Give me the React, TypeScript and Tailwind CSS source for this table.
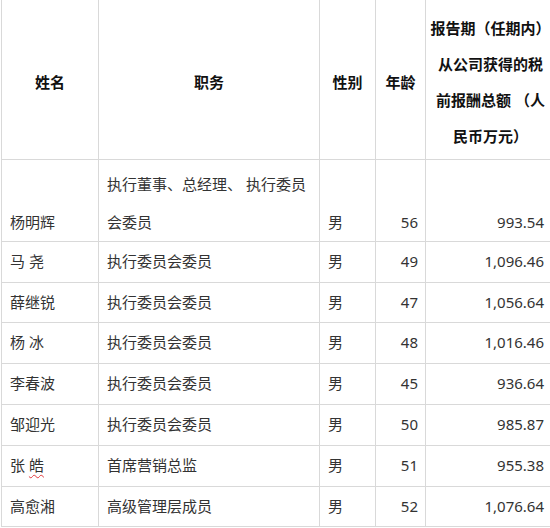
import React from "react";

const rows: { name: React.ReactNode; title: string; sex: string; age: string; pay: string; short?: boolean }[] = [
  { name: "马 尧", title: "执行委员会委员", sex: "男", age: "49", pay: "1,096.46" },
  { name: "薛继锐", title: "执行委员会委员", sex: "男", age: "47", pay: "1,056.64", short: true },
  { name: "杨 冰", title: "执行委员会委员", sex: "男", age: "48", pay: "1,016.46" },
  { name: "李春波", title: "执行委员会委员", sex: "男", age: "45", pay: "936.64" },
  { name: "邹迎光", title: "执行委员会委员", sex: "男", age: "50", pay: "985.87" },
  {
    name: (
      <>
        张 <span className="underline decoration-wavy decoration-[#e0393e] underline-offset-[3px] decoration-1">皓</span>
      </>
    ),
    title: "首席营销总监",
    sex: "男",
    age: "51",
    pay: "955.38",
  },
  { name: "高愈湘", title: "高级管理层成员", sex: "男", age: "52", pay: "1,076.64", short: true },
];

export default function App() {
  const cell = "border border-[#d9d9d9] px-2 py-0 align-middle whitespace-nowrap";
  return (
    <div
      className="w-[550px] h-[528px] overflow-hidden bg-white text-[15px] text-[#333]"
      style={{ fontFamily: '"Noto Sans", "Noto Sans CJK SC", sans-serif' }}
    >
      <table className="ml-px table-fixed border-collapse w-[554px]">
        <colgroup>
          <col className="w-[97px]" />
          <col className="w-[221px]" />
          <col className="w-[56px]" />
          <col className="w-[50px]" />
          <col className="w-[130px]" />
        </colgroup>
        <thead>
          <tr className="h-[159px] font-bold text-[#111]">
            <th className={`${cell} border-t-0 text-center pt-[6px]`}>姓名</th>
            <th className={`${cell} border-t-0 text-center pt-[6px]`}>职务</th>
            <th className={`${cell} border-t-0 text-center pt-[6px]`}>性别</th>
            <th className={`${cell} border-t-0 text-center pt-[6px]`}>年龄</th>
            <th className={`${cell} border-t-0 text-center leading-[36px] !px-0 pt-[6px]`}>
              报告期（任期内）
              <br />
              从公司获得的税
              <br />
              前报酬总额 （人
              <br />
              民币万元）
            </th>
          </tr>
        </thead>
        <tbody>
          <tr className="h-[81px] leading-[38px]">
            <td className={`${cell} !align-bottom`}>杨明辉</td>
            <td className={`${cell} !align-bottom pt-[5px]`}>
              执行董事、总经理、 执行委员
              <br />
              会委员
            </td>
            <td className={`${cell} !align-bottom`}>男</td>
            <td className={`${cell} !align-bottom text-right pr-[7px]`}>56</td>
            <td className={`${cell} !align-bottom text-right pr-[11px]`}>993.54</td>
          </tr>
          {rows.map((r, i) => (
            <tr key={i} className={r.short ? "h-[40px]" : "h-[41px]"}>
              <td className={cell}>{r.name}</td>
              <td className={cell}>{r.title}</td>
              <td className={cell}>{r.sex}</td>
              <td className={`${cell} text-right pr-[7px]`}>{r.age}</td>
              <td className={`${cell} text-right pr-[11px]`}>{r.pay}</td>
            </tr>
          ))}
        </tbody>
      </table>
    </div>
  );
}
